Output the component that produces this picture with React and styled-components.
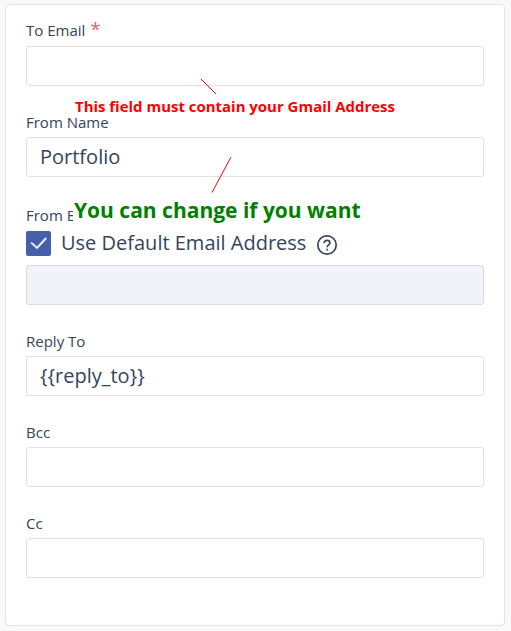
import React from 'react';
import styled, { createGlobalStyle } from 'styled-components';

const GlobalStyle = createGlobalStyle`
  * { box-sizing: border-box; }
  body { margin: 0; background: #f9f9f9; font-family: 'Open Sans', sans-serif; color: #34445a; }
`;

const Page = styled.main`
  height: 631px;
  padding: 4px 6px 5px 5px;
  overflow: hidden;
`;

const Card = styled.form`
  position: relative;
  height: 622px;
  padding: 14px 20px;
  background: #fff;
  border: 1px solid #e3e3e3;
  border-radius: 4px;
`;

const Field = styled.div`
  display: flex;
  flex-direction: column;
  height: ${(p) => p.$height || 91}px;
`;

const Label = styled.label`
  height: ${(p) => p.$height || 26}px;
  font-size: 15px;
  line-height: 22px;
  white-space: nowrap;
`;

const Required = styled.span`
  margin-left: 1px;
  color: #e8607c;
  font-size: 19px;
  line-height: 20px;
`;

const Input = styled.input`
  display: block;
  width: 100%;
  height: 40px;
  padding: 0 13px 2px;
  border: 1px solid ${(p) => (p.disabled ? '#d9dade' : '#e2e2e2')};
  border-radius: 3px;
  background: ${(p) => (p.disabled ? '#f2f3f9' : '#fff')};
  color: #34445a;
  font: 20px 'Open Sans', sans-serif;
  outline: none;
`;

const CheckRow = styled.div`
  display: flex;
  align-items: center;
  height: 31px;
  margin-bottom: 6px;
  font-size: 20px;
`;

const CheckBox = styled.span`
  display: flex;
  width: 25px;
  height: 25px;
  margin-right: 10px;
  border-radius: 2px;
  background: #455fab;
`;

const CheckText = styled.span`
  margin-top: -3px;
`;

const HelpIcon = styled.svg`
  margin: 3px 0 0 10px;
`;

const Note = styled.p`
  position: absolute;
  left: ${(p) => p.$left}px;
  top: ${(p) => p.$top}px;
  margin: 0;
  padding-left: 1px;
  color: ${(p) => p.$color};
  background: ${(p) => p.$fill || 'transparent'};
  font-size: ${(p) => p.$size}px;
  line-height: 1.2;
  font-weight: 700;
  white-space: nowrap;
`;

const Pointers = styled.svg`
  position: absolute;
  left: -6px;
  top: -5px;
  pointer-events: none;
`;

export default function App() {
  return (
    <Page>
      <GlobalStyle />
      <Card>
        <Field $height={92}>
          <Label $height={27}>To Email <Required>*</Required></Label>
          <Input />
        </Field>
        <Field $height={93}>
          <Label>From Name</Label>
          <Input defaultValue="Portfolio" />
        </Field>
        <Field $height={126}>
          <Label $height={24}>From Email</Label>
          <CheckRow>
            <CheckBox>
              <svg width="25" height="25" fill="none" stroke="#f1f3fa" strokeWidth="1.9">
                <path d="M5.2 11.6l5.8 5.4L20.2 7" />
              </svg>
            </CheckBox>
            <CheckText>Use Default Email Address</CheckText>
            <HelpIcon width="22" height="22" viewBox="0 0 22 22" fill="none" stroke="#34445a" strokeWidth="1.7">
              <circle cx="11" cy="11" r="9.2" />
              <path d="M8.1 9c0-1.6 1.2-2.6 2.9-2.6s2.9 1 2.9 2.5c0 2-2.8 2.1-2.8 4.3M11.1 14.8v1.7" />
            </HelpIcon>
          </CheckRow>
          <Input disabled />
        </Field>
        <Field>
          <Label>Reply To</Label>
          <Input defaultValue="{{reply_to}}" />
        </Field>
        <Field>
          <Label>Bcc</Label>
          <Input />
        </Field>
        <Field>
          <Label>Cc</Label>
          <Input />
        </Field>
        <Note $left={68} $top={93} $size={14.96} $color="#f00">This field must contain your Gmail Address</Note>
        <Note $left={67} $top={193} $size={21} $color="#008000" $fill="#fff">You can change if you want</Note>
        <Pointers width="500" height="200" stroke="#f00" strokeWidth="1">
          <path d="M201 79l15 15M231 157l-19 35.5" />
        </Pointers>
      </Card>
    </Page>
  );
}
